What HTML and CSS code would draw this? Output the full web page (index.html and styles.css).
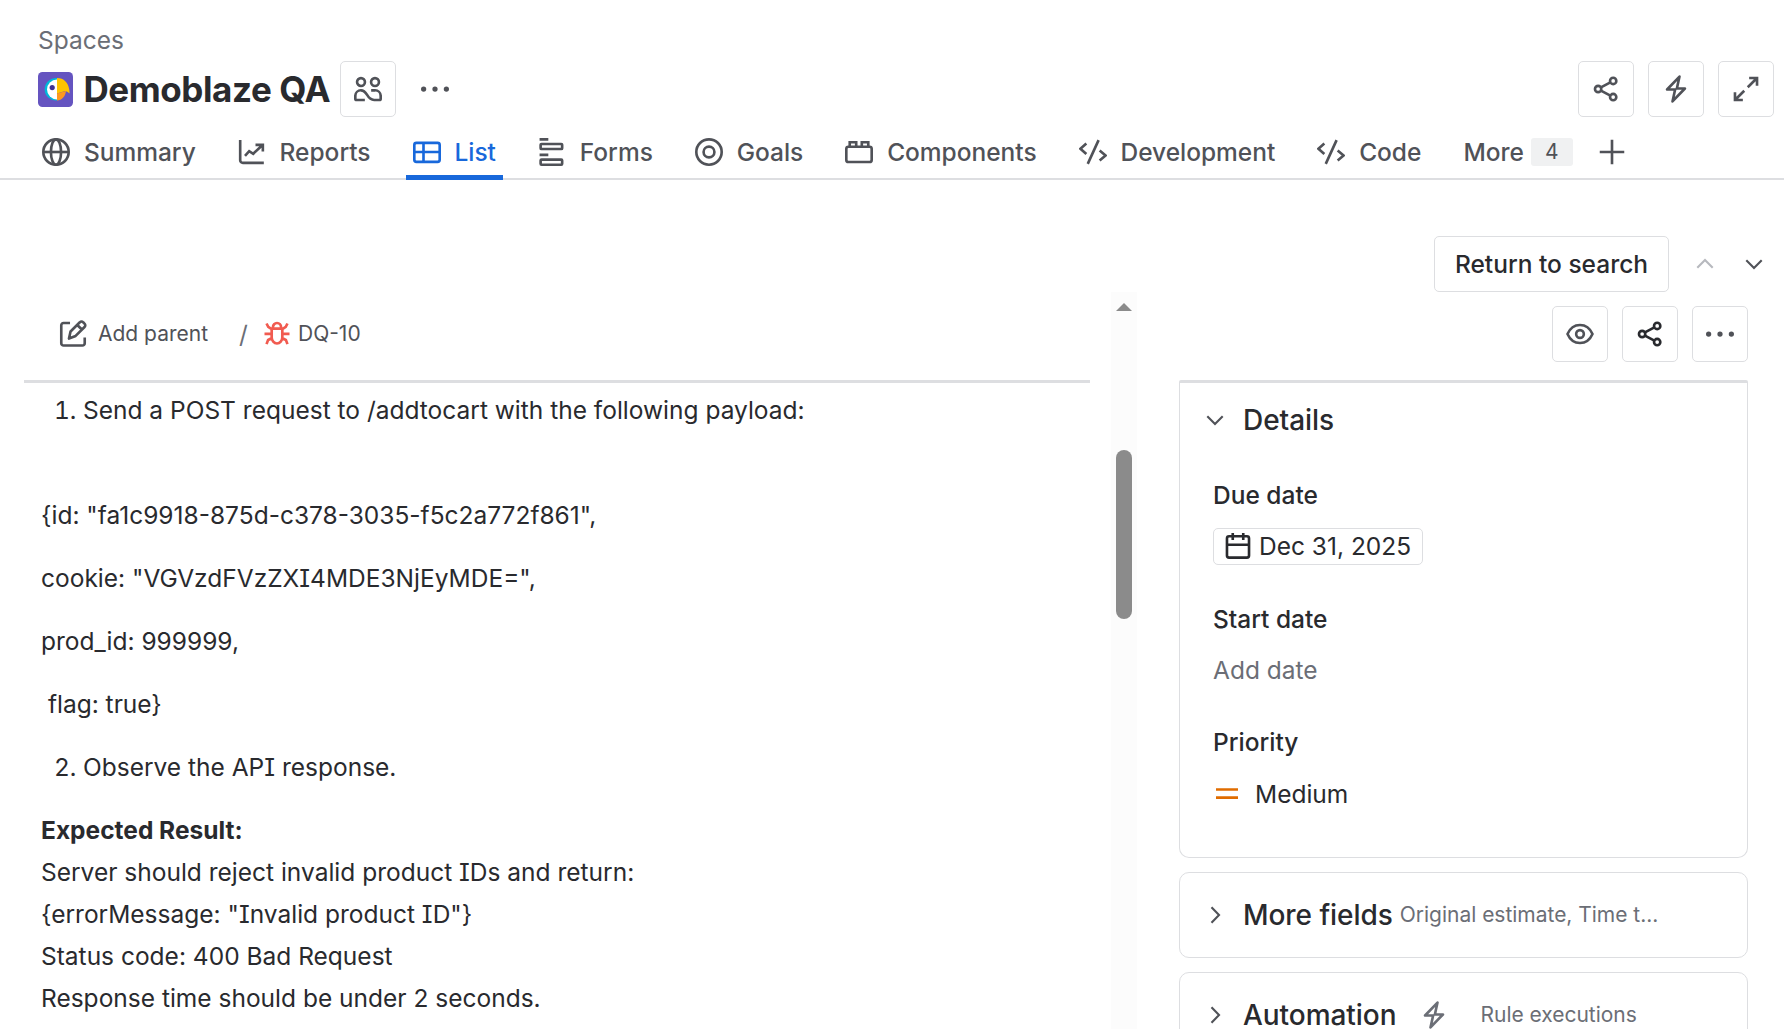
FILE: index.html
```html
<!DOCTYPE html>
<html lang="en">
<head>
<meta charset="utf-8">
<title>Demoblaze QA</title>
<link rel="stylesheet" href="styles.css">
</head>
<body>
<svg class="defs" width="0" height="0">
  <symbol id="share" viewBox="0 0 16 16"><circle cx="3.5" cy="8" r="1.8"/><circle cx="12.100" cy="3.400" r="1.8"/><circle cx="12.100" cy="12.600" r="1.8"/><path d="M5.100 7.100 10.500 4.200M5.100 8.900l5.400 2.900"/></symbol>
  <symbol id="bolt" viewBox="0 0 16 16"><path d="M10 .9 2.9 8.3h4.6L6 15.1l7.1-7.4H8.5z" stroke-linejoin="round"/></symbol>
  <symbol id="dots" viewBox="0 0 16 16"><g fill="currentColor" stroke="none"><circle cx="1.5" cy="8" r="1.5"/><circle cx="8" cy="8" r="1.5"/><circle cx="14.5" cy="8" r="1.5"/></g></symbol>
  <symbol id="code" viewBox="0 0 16 16"><path d="M4.2 3.2.8 6.2l3.4 3M11.2 1.2 5 14.8M11.8 7.1l3.4 2.9-3.4 2.9"/></symbol>
  <symbol id="down" viewBox="0 0 16 16"><path d="m3.6 5.9 4.4 4.4 4.4-4.4"/></symbol>
  <symbol id="right" viewBox="0 0 16 16"><path d="m6 3.6 4.3 4.4L6 12.4"/></symbol>
</svg>

<header class="header">
  <div class="spaces">Spaces</div>
  <div class="title-row">
    <svg class="logo" viewBox="0 0 35 35">
      <rect width="35" height="35" rx="4.5" fill="#6554c0"/>
      <path d="M19 6a11.3 11.3 0 1 0 0 22.500z" fill="#00b8d9"/>
      <path d="M19 7.500a9.800 9.800 0 0 0 0 20z" fill="#fff"/>
      <path d="M19 6c7 0 11 5 12 10.500.400 2 .700 3 .500 5-1.500-1.700-3-2.300-5-2.300L19 21.500z" fill="#ffc400"/>
      <path d="M19 21.500l9-2.400c-.500 5-4 9.400-9 9.400z" fill="#ff991f"/>
      <circle cx="14.200" cy="15.600" r="2.600" fill="#403294"/>
    </svg>
    <h1>Demoblaze QA</h1>
    <span class="btn people"><svg viewBox="0 0 16 16"><circle cx="4" cy="4" r="2.250"/><circle cx="12" cy="4" r="2.250"/><path d="M6.200 14.250H1.500a.750.750 0 0 1-.750-.750v-1.700A3.200 3.200 0 0 1 3.950 8.750C8 8.750 7 14.250 11.500 14.250h3a.750.750 0 0 0 .750-.750v-1.700A3.200 3.200 0 0 0 12.050 8.750H9.800"/></svg></span>
    <span class="plain"><svg><use href="#dots"/></svg></span>
    <div class="actions">
      <span class="btn"><svg><use href="#share"/></svg></span>
      <span class="btn"><svg><use href="#bolt"/></svg></span>
      <span class="btn"><svg viewBox="0 0 16 16"><path d="m9 7 5.300-5.300M9.800 1.700h4.500v4.500M7 9l-5.300 5.300M1.700 9.800v4.500h4.500"/></svg></span>
    </div>
  </div>
  <nav class="tabs">
    <a class="tab"><svg viewBox="0 0 16 16"><circle cx="8" cy="8" r="7.250"/><ellipse cx="8" cy="8" rx="2.900" ry="7.250"/><path d="M.750 8h14.500"/></svg><span>Summary</span></a>
    <a class="tab"><svg viewBox="0 0 16 16"><path d="M1.250 1.200v11.500a1.500 1.500 0 0 0 1.500 1.500h12M4 10.200l2.400-2.700 2.300 1.500 5.300-5M10 3.900h4.200v3.800"/></svg><span>Reports</span></a>
    <a class="tab active"><svg viewBox="0 0 16 16"><rect x=".750" y="2.750" width="14.500" height="10.900" rx="1.200"/><path d="M6 2.750v10.900M.750 8h14.500"/></svg><span>List</span></a>
    <a class="tab"><svg viewBox="0 0 16 16"><path d="M.900.750h5M.900 9.650h5"/><rect x="1.500" y="3.400" width="12.300" height="2.900" rx=".500"/><rect x="1.500" y="12.350" width="12.300" height="2.900" rx=".500"/></svg><span>Forms</span></a>
    <a class="tab"><svg viewBox="0 0 16 16"><circle cx="8" cy="8" r="7.250"/><circle cx="8" cy="8" r="3.100"/></svg><span>Goals</span></a>
    <a class="tab"><svg viewBox="0 0 16 16"><rect x=".750" y="5" width="14.500" height="8.700" rx="1.200"/><path d="M2.700 5V2.400h3.700V5M9.600 5V2.400h3.700V5"/></svg><span>Components</span></a>
    <a class="tab"><svg><use href="#code"/></svg><span>Development</span></a>
    <a class="tab"><svg><use href="#code"/></svg><span>Code</span></a>
    <a class="tab more"><span>More</span><b class="count">4</b></a>
    <svg class="plus" viewBox="0 0 16 16"><path d="M8 1v14M1 8h14"/></svg>
  </nav>
</header>

<div class="toolbar">
  <span class="btn return">Return to search</span>
  <svg class="prev" viewBox="0 0 16 16"><path d="m3.600 10.100L8 5.700l4.400 4.400"/></svg>
  <svg class="next"><use href="#down"/></svg>
</div>

<main class="main">
  <section class="issue">
    <div class="crumbs">
      <svg class="edit" viewBox="0 0 16 16"><path d="M6.300 1.700H2.600a1.300 1.300 0 0 0-1.300 1.300v10.300a1.300 1.300 0 0 0 1.300 1.300h10.800a1.300 1.300 0 0 0 1.300-1.300V10"/><path d="m5.700 10.600.900-4L11.900 1.300a1.300 1.300 0 0 1 1.900 0l.800.800a1.300 1.300 0 0 1 0 1.900L9.500 9.100zM10.600 3l2.300 2.300" stroke-linejoin="round"/></svg>
      <span class="parent">Add parent</span>
      <span class="slash">/</span>
      <svg class="bug" viewBox="0 0 16 16"><path d="M4.600 4.900h6.800v5.600a3.400 3.900 0 0 1-6.800 0zM5.400 4.900V4a2.600 2.700 0 0 1 5.200 0v.900M0 8.200h4.600M11.400 8.200H16M1.300 1.600l1.100 2.200 2.400 1.600M14.700 1.600l-1.100 2.200-2.400 1.600M1.300 14.800l1-2.600 2.500-1.300M14.700 14.800l-1-2.600-2.500-1.300"/></svg>
      <span class="key">DQ-10</span>
    </div>
    <div class="description">
      <ol><li>Send a POST request to /addtocart with the following payload:</li></ol>
      <p class="payload">{id: "fa1c9918-875d-c378-3035-f5c2a772f861",</p>
      <p>cookie: "VGVzdFVzZXI4MDE3NjEyMDE=",</p>
      <p>prod_id: 999999,</p>
      <p>&nbsp;flag: true}</p>
      <ol start="2"><li>Observe the API response.</li></ol>
      <p><strong>Expected Result:</strong><br>Server should reject invalid product IDs and return:<br>{errorMessage: "Invalid product ID"}<br>Status code: 400 Bad Request<br>Response time should be under 2 seconds.</p>
    </div>
  </section>
  <div class="scrollbar">
    <svg class="arrow" viewBox="0 0 16 8"><path d="M8 0l8 8H0z"/></svg>
    <div class="thumb"></div>
    <svg class="arrow" viewBox="0 0 16 8"><path d="M0 0h16L8 8z"/></svg>
  </div>
  <aside class="side">
    <div class="side-actions">
      <span class="btn"><svg viewBox="0 0 16 16"><path d="M.850 8C2.300 4.700 4.900 2.850 8 2.850S13.700 4.700 15.150 8C13.700 11.300 11.100 13.150 8 13.150S2.300 11.300.850 8z" stroke-linejoin="round"/><circle cx="8" cy="8" r="2.200"/></svg></span>
      <span class="btn dark"><svg><use href="#share"/></svg></span>
      <span class="btn"><svg><use href="#dots"/></svg></span>
    </div>
    <div class="card details">
      <div class="card-head"><svg><use href="#down"/></svg><h2>Details</h2></div>
      <div class="label due">Due date</div>
      <div class="date"><svg viewBox="0 0 16 16"><rect x="1.700" y="2.450" width="12.600" height="12.200" rx="1.200"/><path d="M1.700 7.300h12.600M5 .600v4M11 .600v4"/></svg>Dec 31, 2025</div>
      <div class="label start">Start date</div>
      <div class="empty">Add date</div>
      <div class="label priority">Priority</div>
      <div class="value"><svg viewBox="0 0 28 28"><path d="M3 9.500h22M3 17.700h22"/></svg>Medium</div>
    </div>
    <div class="card fold"><svg><use href="#right"/></svg><h2>More fields</h2><span class="hint">Original estimate, Time t...</span></div>
    <div class="card fold"><svg><use href="#right"/></svg><h2>Automation</h2><svg class="rule-bolt"><use href="#bolt"/></svg><span class="hint">Rule executions</span></div>
  </aside>
</main>
</body>
</html>
```
FILE: styles.css
```css
* { box-sizing: border-box; }
body {
  margin: 0;
  width: 1784px;
  height: 1029px;
  overflow: hidden;
  display: flex;
  flex-direction: column;
  background: #fff;
  color: #292a2e;
  font: 24.5px/42px Inter, "Liberation Sans", sans-serif;
  font-feature-settings: "cv08";
}
h1, h2, p, ol { margin: 0; padding: 0; }
svg {
  display: block;
  flex: none;
  width: 28px;
  height: 28px;
  fill: none;
  stroke: currentColor;
  stroke-width: 1.5;
}
.defs { position: absolute; width: 0; height: 0; }

.header { flex: none; padding-top: 22px; color: #505258; }
.spaces { height: 36px; line-height: 36px; padding-left: 38px; color: #6b6e76; }
.title-row { display: flex; align-items: center; height: 56px; margin-top: 3px; padding: 0 10px 0 38px; }
.logo { width: 35px; height: 35px; stroke: none; }
h1 { width: 256px; padding-left: 10.5px; font-size: 35px; font-weight: 650; letter-spacing: -0.42px; color: #292a2e; white-space: nowrap; }
.btn {
  display: flex;
  align-items: center;
  justify-content: center;
  width: 56px;
  height: 56px;
  border: 1px solid #dddee1;
  border-radius: 5px;
  color: #505258;
}
.people { margin-left: 11px; }
.plain { margin-left: 25px; }
.actions { display: flex; gap: 14px; margin-left: auto; }
.tabs {
  display: flex;
  align-items: center;
  gap: 28px;
  height: 56px;
  margin-top: 7px;
  padding-left: 35px;
  font-weight: 500;
  letter-spacing: -0.02px;
  box-shadow: inset 0 -2px #dddee1;
}
.tab { display: flex; align-items: center; gap: 13.9px; height: 56px; padding: 0 7px; white-space: nowrap; }
.active { color: #1868db; box-shadow: inset 0 -5px #1868db; }
.more { gap: 7px; padding-right: 0; }
.count { width: 42px; height: 28px; border-radius: 3px; background: #f0f1f2; font-size: 21px; font-weight: 400; line-height: 27px; text-align: center; }
.plus { margin-left: -3px; }

.toolbar { flex: none; display: flex; align-items: center; height: 56px; margin-top: 56px; padding-left: 1434px; color: #505258; }
.return { width: 235px; color: #292a2e; font-weight: 500; white-space: nowrap; }
.prev { margin-left: 22px; color: #b7b9be; stroke-width: 1.2; }
.next { margin-left: 21px; stroke-width: 1.2; }

.main { display: grid; grid-template-columns: 1087px 26px 1fr; height: 737px; padding-left: 24px; }
.crumbs { display: flex; align-items: center; height: 88px; padding: 0 0 5px 35px; font-size: 21px; color: #505258; white-space: nowrap; }
.edit { margin-right: 11px; }
.parent { width: 141px; }
.slash { width: 25px; font-size: 24.5px; color: #6b6e76; }
.bug { width: 26px; height: 25px; margin-right: 8px; color: #f15b50; stroke-width: 1.7; }
.description { width: 1066px; padding: 6px 0 0 17px; border-top: 3px solid #dddee1; }
.description p, .description ol { margin-bottom: 21px; white-space: nowrap; }
.description ol { padding-left: 42px; }
.description .payload { padding-top: 42px; }
strong { font-weight: 650; }

.scrollbar { display: flex; flex-direction: column; align-items: center; padding: 11px 0 6px; background: #fcfcfc; }
.arrow { width: 16px; height: 8px; fill: #8b8b8b; stroke: none; }
.thumb { width: 16px; height: 169px; margin: 139px 0 auto; border-radius: 8px; background: #8b8b8b; }

.side { padding: 14px 36px 0 42px; }
.side-actions { display: flex; justify-content: flex-end; gap: 14px; height: 74px; }
.dark { color: #292a2e; }
.card { border: 1px solid #dddee1; border-radius: 10px; margin-bottom: 14px; }
h2 { font-size: 28px; font-weight: 500; line-height: 42px; letter-spacing: -0.05px; white-space: nowrap; }
.details { height: 478px; padding: 16px 0 0 33px; border-top-width: 3px; border-radius: 2px 2px 10px 10px; }
.card-head { display: flex; align-items: center; margin-left: -12px; color: #292a2e; }
.card-head svg, .fold svg { color: #505258; stroke-width: 1.2; margin-right: 14px; }
.label { font-weight: 500; }
.due { margin-top: 33px; }
.date { display: flex; align-items: center; gap: 7px; width: 210px; height: 37px; margin-top: 12px; padding-left: 10px; border: 1px solid #dddee1; border-radius: 5px; line-height: 35px; white-space: nowrap; }
.date svg { margin-top: -2px; }
.start { margin-top: 33px; }
.empty { margin-top: 9px; color: #6b6e76; }
.priority { margin-top: 30px; }
.value { display: flex; align-items: center; gap: 14px; margin-top: 10px; }
.value svg { stroke: #e06c00; stroke-width: 2.7; }
.fold { display: flex; align-items: center; height: 86px; padding-left: 21px; }
.hint { padding-left: 7px; font-size: 21px; letter-spacing: -0.02px; color: #6b6e76; white-space: nowrap; }
.fold .rule-bolt { stroke-width: 1.5; margin: 0 25px 0 24px; color: #6b6e76; }
```
